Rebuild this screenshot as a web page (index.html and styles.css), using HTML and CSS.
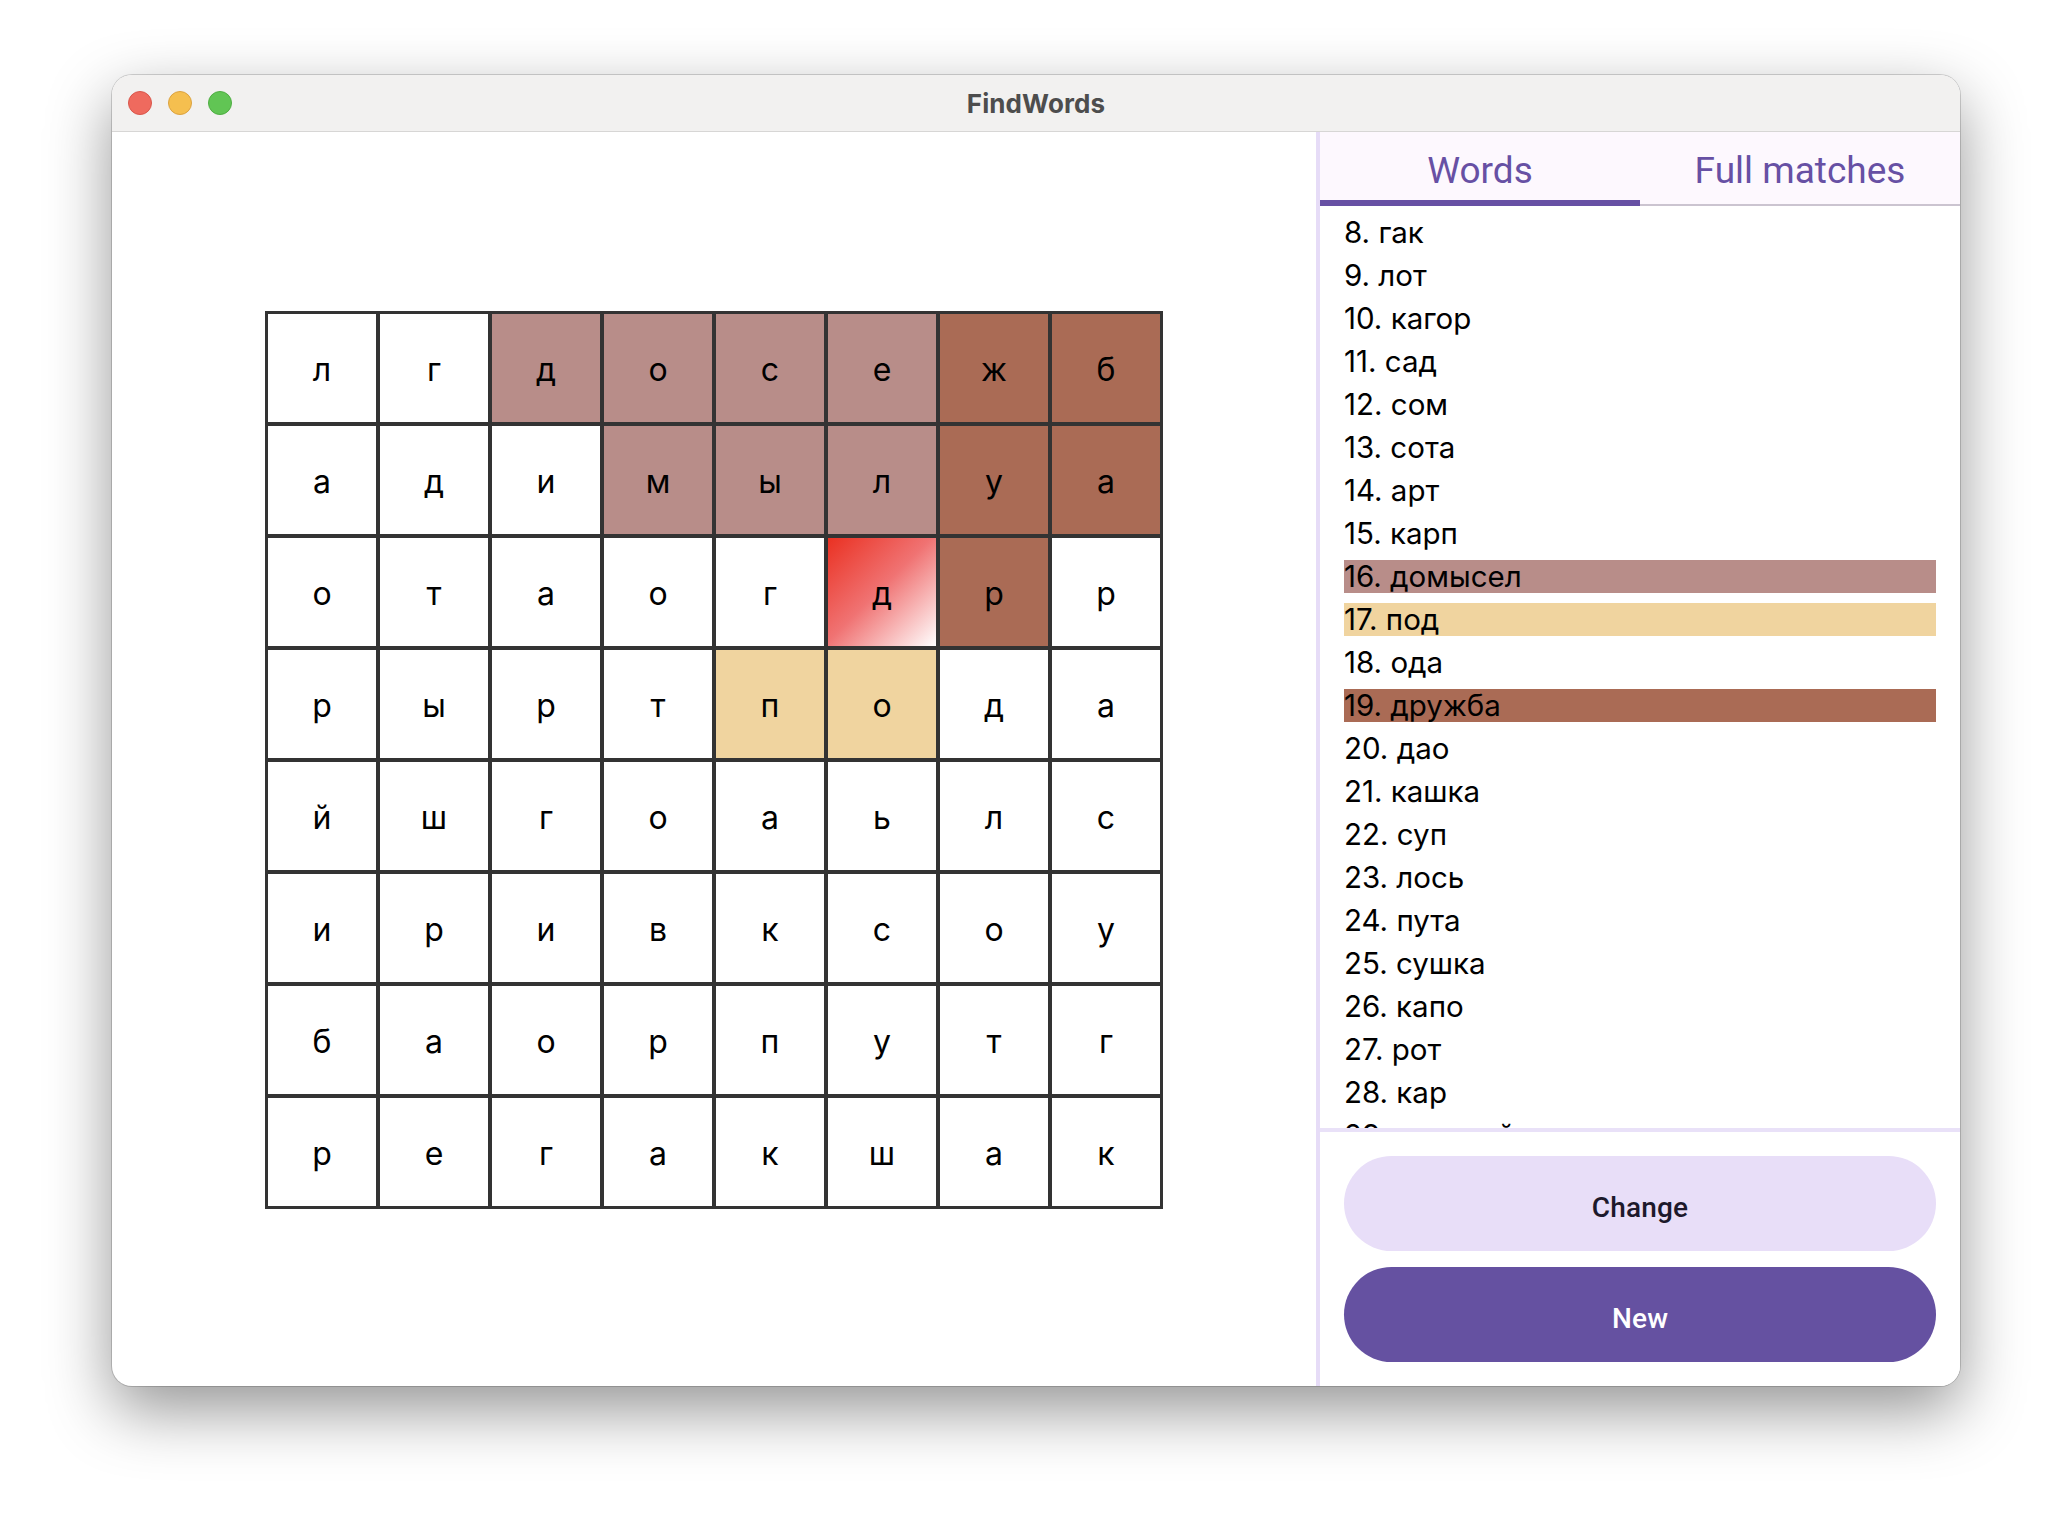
FILE: index.html
```html
<!DOCTYPE html>
<html lang="ru">
<head>
<meta charset="utf-8">
<title>FindWords</title>
<link rel="stylesheet" href="styles.css">
</head>
<body>
<div class="window">
  <div class="titlebar">
    <div class="lights">
      <span class="light red"></span>
      <span class="light yellow"></span>
      <span class="light green"></span>
    </div>
    <div class="title">FindWords</div>
    <div></div>
  </div>
  <div class="content">
    <div class="board">
      <div class="grid">
        <div class="cell">л</div><div class="cell">г</div><div class="cell pink">д</div><div class="cell pink">о</div><div class="cell pink">с</div><div class="cell pink">е</div><div class="cell brown">ж</div><div class="cell brown">б</div>
        <div class="cell">а</div><div class="cell">д</div><div class="cell">и</div><div class="cell pink">м</div><div class="cell pink">ы</div><div class="cell pink">л</div><div class="cell brown">у</div><div class="cell brown">а</div>
        <div class="cell">о</div><div class="cell">т</div><div class="cell">а</div><div class="cell">о</div><div class="cell">г</div><div class="cell clash">д</div><div class="cell brown">р</div><div class="cell">р</div>
        <div class="cell">р</div><div class="cell">ы</div><div class="cell">р</div><div class="cell">т</div><div class="cell yellow">п</div><div class="cell yellow">о</div><div class="cell">д</div><div class="cell">а</div>
        <div class="cell">й</div><div class="cell">ш</div><div class="cell">г</div><div class="cell">о</div><div class="cell">а</div><div class="cell">ь</div><div class="cell">л</div><div class="cell">с</div>
        <div class="cell">и</div><div class="cell">р</div><div class="cell">и</div><div class="cell">в</div><div class="cell">к</div><div class="cell">с</div><div class="cell">о</div><div class="cell">у</div>
        <div class="cell">б</div><div class="cell">а</div><div class="cell">о</div><div class="cell">р</div><div class="cell">п</div><div class="cell">у</div><div class="cell">т</div><div class="cell">г</div>
        <div class="cell">р</div><div class="cell">е</div><div class="cell">г</div><div class="cell">а</div><div class="cell">к</div><div class="cell">ш</div><div class="cell">а</div><div class="cell">к</div>
      </div>
    </div>
    <div class="side">
      <div class="tabs">
        <div class="tab active">Words</div>
        <div class="tab">Full matches</div>
      </div>
      <div class="list">
        <div class="item">8. гак</div>
        <div class="item">9. лот</div>
        <div class="item">10. кагор</div>
        <div class="item">11. сад</div>
        <div class="item">12. сом</div>
        <div class="item">13. сота</div>
        <div class="item">14. арт</div>
        <div class="item">15. карп</div>
        <div class="item pink">16. домысел</div>
        <div class="item yellow">17. под</div>
        <div class="item">18. ода</div>
        <div class="item brown">19. дружба</div>
        <div class="item">20. дао</div>
        <div class="item">21. кашка</div>
        <div class="item">22. суп</div>
        <div class="item">23. лось</div>
        <div class="item">24. пута</div>
        <div class="item">25. сушка</div>
        <div class="item">26. капо</div>
        <div class="item">27. рот</div>
        <div class="item">28. кар</div>
        <div class="item">29. портвейн</div>
      </div>
      <div class="buttons">
        <button class="btn tonal">Change</button>
        <button class="btn filled">New</button>
      </div>
    </div>
  </div>
</div>
</body>
</html>
```

FILE: styles.css
```css
html, body {
  margin: 0;
  padding: 0;
}

body {
  width: 2072px;
  height: 1536px;
  background: #ffffff;
  overflow: hidden;
  font-family: Roboto, "Noto Sans", "DejaVu Sans", sans-serif;
}

.window {
  margin: 75px 0 0 112px;
  width: 1848px;
  height: 1311px;
  border-radius: 20px;
  overflow: hidden;
  background: #ffffff;
  box-shadow: 0 0 0 1px rgba(0, 0, 0, 0.16), 0 24px 64px rgba(0, 0, 0, 0.42);
  display: flex;
  flex-direction: column;
}

.titlebar {
  height: 56px;
  flex: 0 0 56px;
  background: #f2f1f0;
  border-bottom: 1px solid #d7d6d5;
  display: grid;
  grid-template-columns: 1fr auto 1fr;
  align-items: center;
}

.lights {
  display: flex;
  gap: 16px;
  padding-left: 16px;
}

.light {
  width: 24px;
  height: 24px;
  border-radius: 50%;
  box-sizing: border-box;
}

.light.red {
  background: #ef6a5e;
  border: 1px solid #d9564b;
}

.light.yellow {
  background: #f5bf4f;
  border: 1px solid #dba240;
}

.light.green {
  background: #61c554;
  border: 1px solid #4fad42;
}

.title {
  font-family: Inter, "Liberation Sans", sans-serif;
  font-weight: 700;
  font-size: 26px;
  color: #4d4d4d;
  letter-spacing: 0.1px;
}

.content {
  flex: 1;
  display: flex;
  min-height: 0;
}

.board {
  flex: 1;
  display: flex;
  align-items: center;
  justify-content: center;
}

.grid {
  display: grid;
  grid-template-columns: repeat(8, 108px);
  grid-auto-rows: 108px;
  gap: 4px;
  padding: 3px;
  background: #333333;
  margin-top: 2px;
}

.cell {
  background: #ffffff;
  display: flex;
  align-items: center;
  justify-content: center;
  font-family: Inter, Roboto, sans-serif;
  font-size: 32px;
  color: #000000;
  padding-top: 2px;
  box-sizing: border-box;
}

.cell.pink {
  background: #b88d89;
}

.cell.brown {
  background: #aa6b55;
}

.cell.yellow {
  background: #f0d49f;
}

.cell.clash {
  background: linear-gradient(135deg, #ea3122 0%, #f07373 48%, #ffffff 100%);
}

.side {
  width: 640px;
  flex: 0 0 640px;
  border-left: 4px solid #e6dcf7;
  display: flex;
  flex-direction: column;
  background: #ffffff;
}

.tabs {
  height: 74px;
  flex: 0 0 74px;
  display: flex;
  background: #fdf8fe;
  box-shadow: inset 0 -2px 0 #cbc4d0;
}

.tab {
  flex: 1;
  box-sizing: border-box;
  padding-top: 8px;
  border-bottom: 6px solid transparent;
  display: flex;
  align-items: center;
  justify-content: center;
  font-size: 37px;
  color: #6750a4;
}

.tab.active {
  border-bottom-color: #6750a4;
}

.list {
  flex: 1;
  min-height: 0;
  overflow: hidden;
  padding: 10px 24px 0 24px;
  border-bottom: 4px solid #e9e1f8;
}

.item {
  height: 33px;
  line-height: 32px;
  margin-bottom: 10px;
  font-family: Inter, Roboto, sans-serif;
  font-size: 29.5px;
  color: #000000;
  white-space: nowrap;
}

.item.pink {
  background: #b88d89;
}

.item.yellow {
  background: #f0d49f;
}

.item.brown {
  background: #aa6b55;
}

.buttons {
  flex: 0 0 auto;
  padding: 24px;
  display: flex;
  flex-direction: column;
  gap: 16px;
}

.btn {
  height: 95px;
  padding-top: 8px;
  border: none;
  border-radius: 48px;
  font-family: Roboto, "Noto Sans", sans-serif;
  font-size: 28px;
  font-weight: 500;
  letter-spacing: 0.2px;
  cursor: pointer;
}

.btn.tonal {
  background: #e8def8;
  color: #1d192b;
}

.btn.filled {
  background: #6551a1;
  color: #ffffff;
}
```
